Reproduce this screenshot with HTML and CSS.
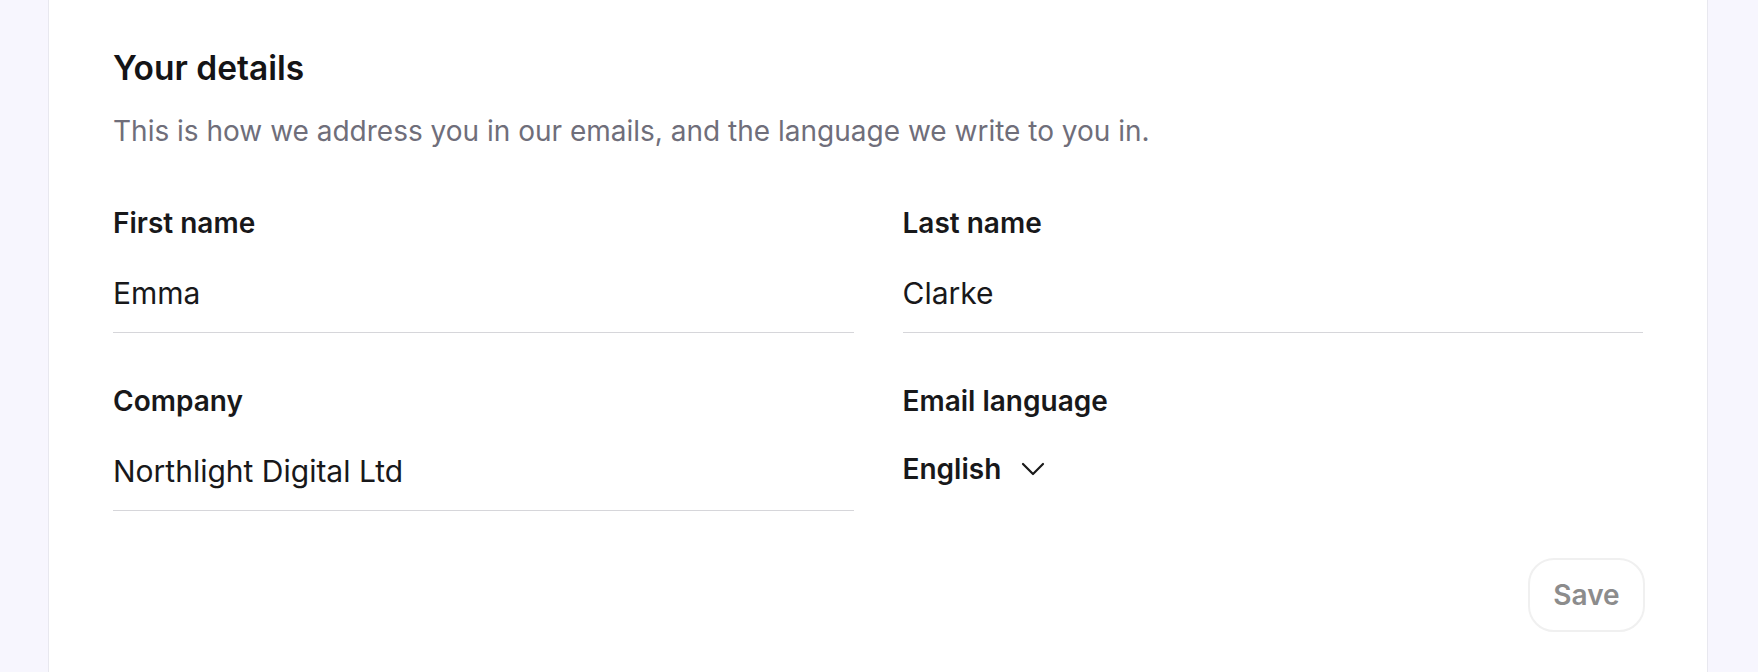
FILE: index.html
```html
<!DOCTYPE html>
<html lang="en">
<head>
<meta charset="utf-8">
<title>Your details</title>
<link rel="stylesheet" href="styles.css">
</head>
<body>
<div class="page">
  <main class="card">
    <h1 class="title">Your details</h1>
    <p class="subtitle">This is how we address you in our emails, and the language we write to you in.</p>
    <form class="form">
      <div class="grid">
        <div class="field">
          <label class="label">First name</label>
          <div class="input">Emma</div>
        </div>
        <div class="field">
          <label class="label">Last name</label>
          <div class="input">Clarke</div>
        </div>
        <div class="field">
          <label class="label">Company</label>
          <div class="input">Northlight Digital Ltd</div>
        </div>
        <div class="field">
          <label class="label">Email language</label>
          <div class="select">
            <span class="select-value">English</span>
            <svg class="chevron" width="24" height="14" viewBox="0 0 24 14" aria-hidden="true"><polyline points="2,2 12,12 22,2" fill="none" stroke="#1a1a1a" stroke-width="2.2" stroke-linecap="round" stroke-linejoin="round"/></svg>
          </div>
        </div>
      </div>
      <div class="actions">
        <button type="button" class="btn">Save</button>
      </div>
    </form>
  </main>
</div>
</body>
</html>
```

FILE: styles.css
```css
* { box-sizing: border-box; }
html, body { margin: 0; padding: 0; }
body {
  background: #f7f6fe;
  font-family: Inter, "Noto Sans", sans-serif;
  color: #161618;
}
.page {
  padding: 0 50px 0 48px;
}
.card {
  background: #ffffff;
  border-left: 1px solid #e8e8ef;
  border-right: 1px solid #e8e8ef;
  min-height: 672px;
  padding: 48px 64px 40px 64px;
}
.title {
  margin: 0;
  font-size: 33.5px;
  line-height: 40px;
  font-weight: 600;
  color: #141416;
}
.subtitle {
  margin: 25px 0 0 0;
  font-size: 28px;
  line-height: 36px;
  color: #6f6e7a;
}
.form {
  margin-top: 58px;
}
.grid {
  display: grid;
  grid-template-columns: 1fr 1fr;
  column-gap: 49px;
  row-gap: 52px;
}
.label {
  display: block;
  font-size: 28px;
  line-height: 32px;
  font-weight: 600;
  color: #18181a;
}
.input {
  margin-top: 36px;
  font-size: 30px;
  line-height: 36px;
  color: #18181a;
  padding-bottom: 21px;
  border-bottom: 1px solid #d6d6da;
}
.select {
  margin-top: 34px;
  display: flex;
  align-items: center;
  gap: 20px;
}
.select-value {
  font-size: 28px;
  line-height: 36px;
  font-weight: 600;
  color: #18181a;
}
.chevron { display: block; }
.actions {
  display: flex;
  justify-content: flex-end;
  margin-top: 47px;
}
.btn {
  font-family: Inter, "Noto Sans", sans-serif;
  font-size: 28px;
  font-weight: 600;
  color: #8c8c8c;
  background: #ffffff;
  border: 2px solid #f0f0f0;
  border-radius: 26px;
  width: 117px;
  height: 74px;
  padding: 0;
  margin-right: -2px;
}
```
